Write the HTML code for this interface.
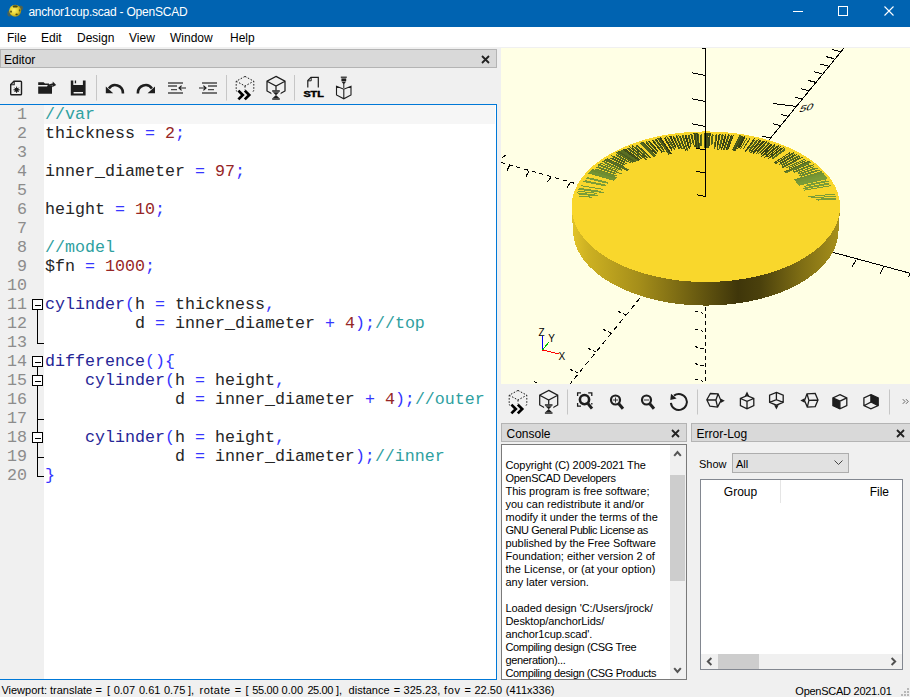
<!DOCTYPE html>
<html lang="en"><head><meta charset="utf-8"><title>anchor1cup.scad - OpenSCAD</title>
<style>
html,body{margin:0;padding:0}
body{width:910px;height:697px;overflow:hidden;background:#f0f0f0;font-family:"Liberation Sans",sans-serif;font-size:12px;color:#000;position:relative}
div{box-sizing:border-box}
.abs{position:absolute}
#titlebar{position:absolute;left:0;top:0;width:910px;height:27px;background:#0063b1;color:#fff}
#titlebar .t{position:absolute;left:28.4px;top:5px;font-size:12px;line-height:14px;white-space:nowrap;letter-spacing:-0.22px}
#menubar{position:absolute;left:0;top:27px;width:910px;height:20px;background:#fff}
#menubar span{position:absolute;top:4px;font-size:12px;line-height:14px}
.docktitle{position:absolute;height:19px;background:#d9d9d9;border:1px solid #b4b4b4;font-size:12px;line-height:14px}
.docktitle .lbl{position:absolute;left:3px;top:3px}
.docktitle svg{position:absolute;right:6px;top:5px}
#editor{position:absolute;left:-1px;top:104px;width:498px;height:576px;border:1px solid #0078d7;background:#fff;overflow:hidden}
#margin{position:absolute;left:0;top:105px;width:44px;height:574px;background:#f0f0f0}
#caret{position:absolute;left:44px;top:105px;width:451px;height:19px;background:#f6f6f6}
.ln{position:absolute;left:0;width:27px;text-align:right;font-family:"Liberation Mono",monospace;font-size:16.667px;line-height:19px;height:19px;color:#8c8c8c}
.cl{position:absolute;left:45px;font-family:"Liberation Mono",monospace;font-size:16.667px;line-height:19px;height:19px;white-space:pre;color:#262626}
.c{color:#2ea0a0}.k{color:#262696}.o{color:#3636ff}.n{color:#962626}
.fold{position:absolute;left:0;top:105px}
#viewport{position:absolute;left:501px;top:48px;width:409px;height:336px;background:#ffffe5;overflow:hidden}
#status{position:absolute;left:0;top:680px;width:910px;height:17px;font-size:11px;line-height:13px}
.small{font-size:11px;line-height:13px}
#console{position:absolute;left:501px;top:444px;width:186px;height:236px;border:1px solid #7a7a7a;background:#fff;overflow:hidden}
#console .txt{position:absolute;left:3.5px;top:14px;font-size:11px;line-height:13px;white-space:pre}
.cl2{height:13px}
.sep{position:absolute;width:1px;background:#c8c8c8}
</style></head><body>
<div id="titlebar">
<svg class="abs" style="left:5px;top:2px" width="22" height="20" viewBox="5 2 22 20"><defs><radialGradient id="og" cx="0.4" cy="0.45" r="0.65"><stop offset="0" stop-color="#fff36a"/><stop offset="0.55" stop-color="#e6cf2e"/><stop offset="1" stop-color="#8a7a10"/></radialGradient></defs><ellipse cx="20.8" cy="8" rx="2.2" ry="2.6" fill="#6b6230" opacity="0.75"/><ellipse cx="9.4" cy="13.4" rx="2" ry="3" fill="#6b6230" opacity="0.7"/><circle cx="15.2" cy="10.8" r="6" fill="url(#og)"/><ellipse cx="15.2" cy="6.4" rx="2.6" ry="1.2" fill="#4d4a12"/><ellipse cx="11" cy="11.6" rx="0.9" ry="1.2" fill="#5d5416"/><ellipse cx="16.6" cy="14.4" rx="1.2" ry="0.8" fill="#4d4a12"/><ellipse cx="19.6" cy="10.4" rx="0.8" ry="1.1" fill="#6a6018"/></svg>
<div class="t">anchor1cup.scad - OpenSCAD</div>
<svg class="abs" style="left:790px;top:0" width="120" height="27" viewBox="0 0 120 27"><path d="M3 11.5 H13" stroke="#fff" stroke-width="1"/><rect x="48.5" y="6.5" width="9" height="9" fill="none" stroke="#fff"/><path d="M94.5 6.5 L103.5 15.5 M103.5 6.5 L94.5 15.5" stroke="#fff" stroke-width="1.1"/></svg>
</div>
<div id="menubar"><span style="left:7px">File</span><span style="left:41px">Edit</span><span style="left:77px">Design</span><span style="left:129px">View</span><span style="left:170px">Window</span><span style="left:230px">Help</span></div>

<div class="docktitle" style="left:0;top:49px;width:497px"><div class="lbl">Editor</div><svg width="9" height="9" viewBox="0 0 9 9"><path d="M1 1 L8 8 M8 1 L1 8" stroke="#222" stroke-width="1.8"/></svg></div>
<svg class="abs" style="left:0;top:68px" width="498" height="36" viewBox="0 68 498 36"><path d="M14 81.2 H20.6 a0.9 0.9 0 0 1 0.9 0.9 V93.9 a0.9 0.9 0 0 1 -0.9 0.9 H11.6 a0.9 0.9 0 0 1 -0.9 -0.9 V84.6 Z" fill="none" stroke="#1e1e1e" stroke-width="1.4"/><path d="M14.2 81.4 V84.8 H10.9" fill="none" stroke="#1e1e1e" stroke-width="1.1"/><circle cx="16.6" cy="89.8" r="2.1" fill="#1e1e1e"/><path d="M16.6 86.6 V93 M13.4 89.8 H19.8 M14.4 87.6 L18.8 92 M18.8 87.6 L14.4 92" stroke="#1e1e1e" stroke-width="0.9"/><path d="M38.2 82.2 H43.6 L45 83.6 H49 V85 H38.2 Z" fill="#1e1e1e"/><path d="M38.2 86.6 H47 L48.6 85.2 H52 V93.8 H38.2 Z" fill="#1e1e1e"/><path d="M47.5 86.6 Q50 83.6 53.5 84.4" fill="none" stroke="#1e1e1e" stroke-width="1.6"/><path d="M52.8 81.6 L56.2 84.9 L52.2 87.2 Z" fill="#1e1e1e"/><path d="M70.8 80.5 H73.3 V85 H82.9 V80.5 H85.6 V95.5 H70.8 Z" fill="#1e1e1e"/><rect x="74.8" y="80.5" width="1.3" height="2.8" fill="#1e1e1e"/><rect x="73.6" y="92" width="9.4" height="1.5" fill="#f0f0f0"/><rect x="96.0" y="75" width="1" height="25.5" fill="#c6c6c6"/><rect x="226.0" y="75" width="1" height="25.5" fill="#c6c6c6"/><rect x="294.0" y="75" width="1" height="25.5" fill="#c6c6c6"/><path d="M108.9 88.4 A7.7 7.7 0 0 1 122.9 92.8 V93.4" fill="none" stroke="#1e1e1e" stroke-width="2.6"/><path d="M105.8 86.4 L113.2 93.3 H105.8 Z" fill="#1e1e1e"/><path d="M151.9 88.4 A7.7 7.7 0 0 0 137.9 92.8 V93.4" fill="none" stroke="#1e1e1e" stroke-width="2.6"/><path d="M155 86.4 L147.6 93.3 H155 Z" fill="#1e1e1e"/><path d="M168 83 H183 M168 86 H177 M171 89.6 H177 M168 93 H183" stroke="#4a4a4a" stroke-width="1.3"/><path d="M179 88 H186 M181.6 85.6 L179 88 L181.6 90.4" stroke="#1e1e1e" stroke-width="1.2" fill="none"/><path d="M202 83 H217 M208 86 H217 M208 89.6 H214 M202 93 H217" stroke="#4a4a4a" stroke-width="1.3"/><path d="M199 88 H206 M203.4 85.6 L206 88 L203.4 90.4" stroke="#1e1e1e" stroke-width="1.2" fill="none"/><path d="M245.0 76.4 L253.8 81.2 L253.8 90.8 L245.0 95.6 L236.2 90.8 L236.2 81.2 Z M236.2 81.2 L245 86 L253.8 81.2 M245 86 V91" fill="none" stroke="#1e1e1e" stroke-width="1" stroke-dasharray="1.6 1.6"/><rect x="237" y="89.6" width="15" height="10.5" fill="#f0f0f0"/><path d="M238.4 90.6 L242.8 95 L238.4 99.4 M244.8 90.6 L249.2 95 L244.8 99.4" fill="none" stroke="#000" stroke-width="2.7"/><path d="M276.0 76.4 L285.0 81.2 L285.0 91.0 L276.0 96.0 L267.0 91.0 L267.0 81.2 Z M267 81.2 L276 86 L285 81.2 M276 86 V91" fill="none" stroke="#1e1e1e" stroke-width="1.25"/><rect x="271.4" y="90.4" width="9.2" height="9.6" fill="#f0f0f0"/><path d="M272.2 91 H279.8 M272.2 99 H279.8" stroke="#1e1e1e" stroke-width="1.3"/><path d="M272.8 92.2 H279.2 L276 95.2 Z M276 95 L279.2 98 H272.8 Z" fill="#1e1e1e"/><path d="M307.8 87.5 V80.6 L311 77.4 H318.3 V87.5" fill="none" stroke="#1e1e1e" stroke-width="1.2"/><path d="M311.2 77.6 V80.8 H308" fill="none" stroke="#1e1e1e" stroke-width="1"/><text x="303.4" y="97.2" font-family="Liberation Sans, sans-serif" font-weight="bold" font-size="9.4" textLength="20.4" lengthAdjust="spacingAndGlyphs" fill="#000" stroke="#000" stroke-width="0.5">STL</text><rect x="340.8" y="76.6" width="6" height="1.2" fill="#1e1e1e"/><rect x="341.4" y="78.4" width="4.8" height="2.6" fill="#1e1e1e"/><path d="M341.4 81.4 H346.2 L343.8 84.4 Z" fill="#1e1e1e"/><path d="M343.8 84 V88" stroke="#1e1e1e" stroke-width="1"/><path d="M336.5 86.2 L343.8 89.2 L351 86.2 V95 L343.8 98.8 L336.5 95 Z M343.8 89.2 V98.8" fill="none" stroke="#1e1e1e" stroke-width="1.1"/></svg>
<div id="editor"></div>
<div id="margin"></div><div id="caret"></div>
<div class="ln" style="top:105px">1</div><div class="cl" style="top:105px"><span class="c">//var</span></div>
<div class="ln" style="top:124px">2</div><div class="cl" style="top:124px">thickness <span class="o">=</span> <span class="n">2</span><span class="o">;</span></div>
<div class="ln" style="top:143px">3</div><div class="cl" style="top:143px"></div>
<div class="ln" style="top:162px">4</div><div class="cl" style="top:162px">inner_diameter <span class="o">=</span> <span class="n">97</span><span class="o">;</span></div>
<div class="ln" style="top:181px">5</div><div class="cl" style="top:181px"></div>
<div class="ln" style="top:200px">6</div><div class="cl" style="top:200px">height <span class="o">=</span> <span class="n">10</span><span class="o">;</span></div>
<div class="ln" style="top:219px">7</div><div class="cl" style="top:219px"></div>
<div class="ln" style="top:238px">8</div><div class="cl" style="top:238px"><span class="c">//model</span></div>
<div class="ln" style="top:257px">9</div><div class="cl" style="top:257px">$fn <span class="o">=</span> <span class="n">1000</span><span class="o">;</span></div>
<div class="ln" style="top:276px">10</div><div class="cl" style="top:276px"></div>
<div class="ln" style="top:295px">11</div><div class="cl" style="top:295px"><span class="k">cylinder</span><span class="o">(</span>h <span class="o">=</span> thickness<span class="o">,</span></div>
<div class="ln" style="top:314px">12</div><div class="cl" style="top:314px">         d <span class="o">=</span> inner_diameter <span class="o">+</span> <span class="n">4</span><span class="o">);</span><span class="c">//top</span></div>
<div class="ln" style="top:333px">13</div><div class="cl" style="top:333px"></div>
<div class="ln" style="top:352px">14</div><div class="cl" style="top:352px"><span class="k">difference</span><span class="o">(){</span></div>
<div class="ln" style="top:371px">15</div><div class="cl" style="top:371px">    <span class="k">cylinder</span><span class="o">(</span>h <span class="o">=</span> height<span class="o">,</span></div>
<div class="ln" style="top:390px">16</div><div class="cl" style="top:390px">             d <span class="o">=</span> inner_diameter <span class="o">+</span> <span class="n">4</span><span class="o">);</span><span class="c">//outer</span></div>
<div class="ln" style="top:409px">17</div><div class="cl" style="top:409px"></div>
<div class="ln" style="top:428px">18</div><div class="cl" style="top:428px">    <span class="k">cylinder</span><span class="o">(</span>h <span class="o">=</span> height<span class="o">,</span></div>
<div class="ln" style="top:447px">19</div><div class="cl" style="top:447px">             d <span class="o">=</span> inner_diameter<span class="o">);</span><span class="c">//inner</span></div>
<div class="ln" style="top:466px">20</div><div class="cl" style="top:466px"><span class="o">}</span></div>

<svg class="fold" width="46" height="575" viewBox="0 105 46 575" shape-rendering="crispEdges"><path d="M37.5 309.5 V343.0 H44" fill="none" stroke="#000"/><rect x="32.5" y="299.5" width="10" height="10" fill="#fff" stroke="#000"/><line x1="35" y1="305.0" x2="41" y2="305.0" stroke="#000"/><path d="M37.5 366.5 V476.0 H44 M37.5 419.0 H44 M37.5 457.0 H44" fill="none" stroke="#000"/><rect x="32.5" y="356.5" width="10" height="10" fill="#fff" stroke="#000"/><line x1="35" y1="362.0" x2="41" y2="362.0" stroke="#000"/><rect x="32.5" y="375.5" width="10" height="10" fill="#fff" stroke="#000"/><line x1="35" y1="381.0" x2="41" y2="381.0" stroke="#000"/><rect x="32.5" y="432.5" width="10" height="10" fill="#fff" stroke="#000"/><line x1="35" y1="438.0" x2="41" y2="438.0" stroke="#000"/></svg>

<div id="viewport"><svg width="409" height="336" viewBox="0 0 409 336" shape-rendering="crispEdges"><defs><linearGradient id="side" x1="0" x2="1" y1="0" y2="0"><stop offset="0" stop-color="#e3c428"/><stop offset="0.06" stop-color="#cdb122"/><stop offset="0.25" stop-color="#a58e1a"/><stop offset="0.45" stop-color="#6e5f11"/><stop offset="0.62" stop-color="#3f360a"/><stop offset="0.70" stop-color="#4a400c"/><stop offset="0.85" stop-color="#7d6c14"/><stop offset="1" stop-color="#a8911b"/></linearGradient></defs>
<path d="M0.0,114.5 L76.0,136.0" stroke="#000" stroke-dasharray="4 4" fill="none"/>
<path d="M8.5,117.5 L6.0,122.5" stroke="#000" fill="none"/>
<path d="M28.0,123.0 L25.0,128.5" stroke="#000" fill="none"/>
<path d="M50.0,129.0 L46.5,134.0" stroke="#000" fill="none"/>
<path d="M69.6,134.0 L66.0,139.5" stroke="#000" fill="none"/>
<path d="M5.0,107.0 L1.5,109.5" stroke="#000" fill="none"/>
<path d="M139.0,250.0 L69.0,336.0" stroke="#000" stroke-dasharray="5 4" fill="none"/>
<path d="M125.0,267.0 l-3,-1.5 m-2,-1 l-3,-1" stroke="#000" fill="none"/>
<path d="M110.0,285.0 l-3,-1.5 m-2,-1 l-3,-1" stroke="#000" fill="none"/>
<path d="M95.0,304.0 l-3,-1.5 m-2,-1 l-3,-1" stroke="#000" fill="none"/>
<path d="M77.0,325.0 l-3,-1.5 m-2,-1 l-3,-1" stroke="#000" fill="none"/>
<path d="M36.0,335.0 l-3,-1.5" stroke="#000" fill="none"/>
<path d="M204.5,252.0 L204.5,336.0" stroke="#000" stroke-dasharray="4 3" fill="none"/>
<path d="M204.5,266.0 m-2,-0.5 l-3,-0.8 m-2.5,-0.7 l-3,-1" stroke="#000" fill="none"/>
<path d="M204.5,284.0 m-2,-0.5 l-3,-0.8 m-2.5,-0.7 l-3,-1" stroke="#000" fill="none"/>
<path d="M204.5,301.5 m-2,-0.5 l-3,-0.8 m-2.5,-0.7 l-3,-1" stroke="#000" fill="none"/>
<path d="M204.5,318.5 m-2,-0.5 l-3,-0.8 m-2.5,-0.7 l-3,-1" stroke="#000" fill="none"/>
<path d="M204.5,334.0 m-2,-0.5 l-3,-0.8 m-2.5,-0.7 l-3,-1" stroke="#000" fill="none"/>
<path d="M268.0,92.0 L343.0,0.0" stroke="#000" fill="none"/>
<path d="M268.8,90.0 l-8,-2" stroke="#000" fill="none"/>
<path d="M279.9,77.8 l-8,-2" stroke="#000" fill="none"/>
<path d="M288.0,68.5 l-8,-2" stroke="#000" fill="none"/>
<path d="M301.7,51.2 l-8,-2" stroke="#000" fill="none"/>
<path d="M308.0,42.8 l-8,-2" stroke="#000" fill="none"/>
<path d="M314.7,34.3 l-8,-2" stroke="#000" fill="none"/>
<path d="M320.8,25.8 l-8,-2" stroke="#000" fill="none"/>
<path d="M326.8,17.9 l-8,-2" stroke="#000" fill="none"/>
<path d="M332.9,10.6 l-8,-2" stroke="#000" fill="none"/>
<path d="M339.0,3.6 l-8,-2" stroke="#000" fill="none"/>
<path d="M295.4,58.5 l-23,-3" stroke="#000" fill="none"/>
<text x="0" y="0" font-family="Liberation Sans, sans-serif" font-size="10" fill="#000" transform="translate(297.5 64.5) rotate(-12) skewX(-35) scale(1.25 0.85)">50</text>
<path d="M327.0,203.0 L410.0,225.5" stroke="#000" fill="none"/>
<path d="M355.3,211.4 L351.3,218.6" stroke="#000" fill="none"/>
<path d="M382.8,218.3 L379.4,225.7" stroke="#000" fill="none"/>
<path d="M409.0,226.0 L407.5,229.0" stroke="#000" fill="none"/>
<path d="M70.5,158.7 A134.3,75.3 0 0 0 339.1,158.7 L337.6,182.3 A132.8,75.3 0 0 1 72.0,182.3 Z" fill="url(#side)"/>
<ellipse cx="204.8" cy="158.7" rx="134.3" ry="75.3" fill="#f9d72c"/>
<path d="M335.7,151.0 L316.7,152.1" stroke="#7a9c38" stroke-width="1" fill="none"/>
<path d="M335.5,150.0 L315.2,151.3" stroke="#7a9c38" stroke-width="1" fill="none"/>
<path d="M335.0,148.0 L310.4,150.0" stroke="#7a9c38" stroke-width="1" fill="none"/>
<path d="M334.5,146.0 L307.1,148.7" stroke="#7a9c38" stroke-width="1" fill="none"/>
<path d="M329.6,137.8 L303.1,142.2" stroke="#7a9c38" stroke-width="1" fill="none"/>
<path d="M328.2,136.1 L302.1,140.8" stroke="#7a9c38" stroke-width="1" fill="none"/>
<path d="M327.7,135.2 L304.1,139.7" stroke="#7a9c38" stroke-width="1" fill="none"/>
<path d="M327.5,133.3 L303.2,138.3" stroke="#7a9c38" stroke-width="1" fill="none"/>
<path d="M325.2,132.8 L305.7,137.0" stroke="#7a9c38" stroke-width="1" fill="none"/>
<path d="M326.5,130.6 L297.8,137.2" stroke="#7a9c38" stroke-width="1" fill="none"/>
<path d="M325.9,129.8 L297.3,136.6" stroke="#7a9c38" stroke-width="1" fill="none"/>
<path d="M325.3,129.0 L296.9,136.0" stroke="#7a9c38" stroke-width="1" fill="none"/>
<path d="M324.6,128.2 L296.4,135.4" stroke="#7a9c38" stroke-width="1" fill="none"/>
<path d="M324.0,127.4 L295.9,134.8" stroke="#789937" stroke-width="1" fill="none"/>
<path d="M323.3,126.6 L295.3,134.2" stroke="#769736" stroke-width="1" fill="none"/>
<path d="M322.7,125.8 L294.8,133.6" stroke="#769635" stroke-width="1" fill="none"/>
<path d="M322.0,125.1 L294.3,133.0" stroke="#739334" stroke-width="1" fill="none"/>
<path d="M321.3,124.3 L293.7,132.5" stroke="#719033" stroke-width="1" fill="none"/>
<path d="M320.6,123.6 L293.2,131.9" stroke="#708e32" stroke-width="1" fill="none"/>
<path d="M318.6,122.3 L300.1,128.2" stroke="#6d8a30" stroke-width="1" fill="none"/>
<path d="M316.1,122.2 L298.0,128.1" stroke="#69852f" stroke-width="1" fill="none"/>
<path d="M316.9,120.0 L298.5,126.4" stroke="#6e8c30" stroke-width="1" fill="none"/>
<path d="M314.0,120.1 L297.3,126.0" stroke="#6a862e" stroke-width="1" fill="none"/>
<path d="M313.0,118.6 L297.4,124.4" stroke="#68832d" stroke-width="1" fill="none"/>
<path d="M312.9,116.7 L292.6,124.6" stroke="#617a2a" stroke-width="1" fill="none"/>
<path d="M309.7,117.0 L292.5,123.9" stroke="#647e2b" stroke-width="1" fill="none"/>
<path d="M308.4,115.7 L292.0,122.5" stroke="#596f26" stroke-width="1" fill="none"/>
<path d="M309.8,114.2 L284.9,124.7" stroke="#66802b" stroke-width="1" fill="none"/>
<path d="M308.9,113.6 L284.2,124.3" stroke="#607828" stroke-width="1" fill="none"/>
<path d="M308.1,113.0 L283.6,123.8" stroke="#556a24" stroke-width="1" fill="none"/>
<path d="M304.8,112.5 L288.1,120.2" stroke="#576c24" stroke-width="1" fill="none"/>
<path d="M304.2,110.9 L284.8,120.2" stroke="#627a28" stroke-width="1" fill="none"/>
<path d="M301.5,109.4 L280.9,119.9" stroke="#526522" stroke-width="1" fill="none"/>
<path d="M299.2,109.6 L280.4,119.3" stroke="#516321" stroke-width="1" fill="none"/>
<path d="M298.5,108.0 L280.7,117.6" stroke="#4f6120" stroke-width="1" fill="none"/>
<path d="M297.7,107.5 L280.6,116.9" stroke="#5d7425" stroke-width="1" fill="none"/>
<path d="M296.0,106.4 L278.0,116.7" stroke="#4d5d1f" stroke-width="1" fill="none"/>
<path d="M293.7,106.8 L279.4,115.1" stroke="#45551b" stroke-width="1" fill="none"/>
<path d="M293.0,105.2 L278.5,114.0" stroke="#5b7023" stroke-width="1" fill="none"/>
<path d="M293.2,104.1 L274.4,115.7" stroke="#4a591d" stroke-width="1" fill="none"/>
<path d="M289.2,104.5 L273.1,114.9" stroke="#49571c" stroke-width="1" fill="none"/>
<path d="M283.9,101.9 L271.1,111.1" stroke="#576b21" stroke-width="1" fill="none"/>
<path d="M284.2,100.6 L270.7,110.5" stroke="#576b21" stroke-width="1" fill="none"/>
<path d="M282.6,99.6 L269.4,109.7" stroke="#44511a" stroke-width="1" fill="none"/>
<path d="M281.1,99.7 L267.2,110.4" stroke="#3b4716" stroke-width="1" fill="none"/>
<path d="M279.9,98.4 L266.6,109.0" stroke="#3a4615" stroke-width="1" fill="none"/>
<path d="M277.8,97.8 L263.5,109.7" stroke="#424e18" stroke-width="1" fill="none"/>
<path d="M276.3,97.9 L264.9,107.6" stroke="#394415" stroke-width="1" fill="none"/>
<path d="M274.1,97.5 L262.5,107.7" stroke="#54671f" stroke-width="1" fill="none"/>
<path d="M274.0,96.4 L260.3,108.8" stroke="#384314" stroke-width="1" fill="none"/>
<path d="M271.2,96.6 L259.8,107.3" stroke="#384214" stroke-width="1" fill="none"/>
<path d="M270.6,95.9 L259.9,106.1" stroke="#374214" stroke-width="1" fill="none"/>
<path d="M268.6,95.4 L258.5,105.4" stroke="#3f4a17" stroke-width="1" fill="none"/>
<path d="M268.1,94.6 L257.2,105.7" stroke="#53661f" stroke-width="1" fill="none"/>
<path d="M265.8,94.4 L254.9,105.9" stroke="#49581b" stroke-width="1" fill="none"/>
<path d="M265.5,93.4 L256.1,103.5" stroke="#3f4917" stroke-width="1" fill="none"/>
<path d="M263.4,93.0 L252.2,105.5" stroke="#363f13" stroke-width="1" fill="none"/>
<path d="M261.8,93.4 L251.9,104.7" stroke="#3e4916" stroke-width="1" fill="none"/>
<path d="M259.9,92.9 L249.4,105.4" stroke="#49571a" stroke-width="1" fill="none"/>
<path d="M259.4,92.0 L250.5,102.9" stroke="#3e4816" stroke-width="1" fill="none"/>
<path d="M257.6,91.2 L248.2,103.4" stroke="#48571a" stroke-width="1" fill="none"/>
<path d="M255.6,92.4 L248.0,102.3" stroke="#52641e" stroke-width="1" fill="none"/>
<path d="M253.7,91.8 L246.5,101.7" stroke="#52641e" stroke-width="1" fill="none"/>
<path d="M253.6,90.4 L243.7,104.3" stroke="#3d4716" stroke-width="1" fill="none"/>
<path d="M249.1,90.3 L242.1,101.1" stroke="#48561a" stroke-width="1" fill="none"/>
<path d="M246.1,89.9 L239.2,101.3" stroke="#52641e" stroke-width="1" fill="none"/>
<path d="M244.0,89.6 L238.2,99.9" stroke="#343d12" stroke-width="1" fill="none"/>
<path d="M243.6,88.4 L236.5,101.2" stroke="#343d12" stroke-width="1" fill="none"/>
<path d="M242.0,89.3 L237.0,98.6" stroke="#3d4716" stroke-width="1" fill="none"/>
<path d="M241.7,87.9 L233.9,102.8" stroke="#48561a" stroke-width="1" fill="none"/>
<path d="M240.7,87.7 L233.1,102.6" stroke="#3d4716" stroke-width="1" fill="none"/>
<path d="M239.7,87.5 L232.4,102.5" stroke="#52641e" stroke-width="1" fill="none"/>
<path d="M238.7,87.4 L231.6,102.4" stroke="#48561a" stroke-width="1" fill="none"/>
<path d="M232.5,86.9 L226.9,101.4" stroke="#343d12" stroke-width="1" fill="none"/>
<path d="M230.9,88.3 L226.0,101.6" stroke="#48561a" stroke-width="1" fill="none"/>
<path d="M230.5,86.6 L225.1,101.6" stroke="#343d12" stroke-width="1" fill="none"/>
<path d="M228.2,87.1 L223.4,101.8" stroke="#52641e" stroke-width="1" fill="none"/>
<path d="M227.5,86.2 L222.5,102.0" stroke="#3d4716" stroke-width="1" fill="none"/>
<path d="M225.0,87.6 L221.4,100.2" stroke="#343d12" stroke-width="1" fill="none"/>
<path d="M224.5,85.8 L220.2,101.8" stroke="#3d4716" stroke-width="1" fill="none"/>
<path d="M222.1,87.1 L218.6,101.3" stroke="#48561a" stroke-width="1" fill="none"/>
<path d="M221.2,86.4 L217.8,101.7" stroke="#52641e" stroke-width="1" fill="none"/>
<path d="M219.2,86.3 L216.1,101.7" stroke="#48561a" stroke-width="1" fill="none"/>
<path d="M218.3,85.7 L215.9,98.5" stroke="#343d12" stroke-width="1" fill="none"/>
<path d="M216.0,87.0 L214.1,99.4" stroke="#3d4716" stroke-width="1" fill="none"/>
<path d="M215.2,86.1 L213.0,101.2" stroke="#52641e" stroke-width="1" fill="none"/>
<path d="M212.1,86.7 L211.2,95.6" stroke="#52641e" stroke-width="1" fill="none"/>
<path d="M211.2,85.6 L210.2,96.6" stroke="#52641e" stroke-width="1" fill="none"/>
<path d="M209.2,85.0 L208.4,97.5" stroke="#3d4716" stroke-width="1" fill="none"/>
<path d="M208.2,84.9 L207.5,100.2" stroke="#3d4716" stroke-width="1" fill="none"/>
<path d="M207.1,84.9 L206.7,100.2" stroke="#48561a" stroke-width="1" fill="none"/>
<path d="M206.1,84.9 L205.8,100.2" stroke="#3d4716" stroke-width="1" fill="none"/>
<path d="M205.1,84.9 L205.0,100.2" stroke="#3d4716" stroke-width="1" fill="none"/>
<path d="M204.1,84.9 L204.2,100.2" stroke="#52641e" stroke-width="1" fill="none"/>
<path d="M203.1,84.9 L203.4,100.2" stroke="#48561a" stroke-width="1" fill="none"/>
<path d="M200.0,85.7 L200.8,97.9" stroke="#52641e" stroke-width="1" fill="none"/>
<path d="M199.1,86.7 L200.0,98.1" stroke="#48561a" stroke-width="1" fill="none"/>
<path d="M196.9,85.0 L198.6,100.3" stroke="#48561a" stroke-width="1" fill="none"/>
<path d="M195.9,85.1 L197.8,100.3" stroke="#343d12" stroke-width="1" fill="none"/>
<path d="M194.9,85.1 L197.0,100.4" stroke="#52641e" stroke-width="1" fill="none"/>
<path d="M193.9,85.2 L196.1,100.4" stroke="#3d4716" stroke-width="1" fill="none"/>
<path d="M192.9,85.2 L195.3,100.4" stroke="#3d4716" stroke-width="1" fill="none"/>
<path d="M191.1,86.7 L193.4,99.0" stroke="#48561a" stroke-width="1" fill="none"/>
<path d="M189.8,85.5 L191.9,95.4" stroke="#48561a" stroke-width="1" fill="none"/>
<path d="M188.1,86.9 L190.1,95.6" stroke="#48561a" stroke-width="1" fill="none"/>
<path d="M187.1,87.1 L190.0,98.6" stroke="#48561a" stroke-width="1" fill="none"/>
<path d="M185.0,86.9 L189.0,101.2" stroke="#3d4716" stroke-width="1" fill="none"/>
<path d="M184.1,87.3 L187.8,100.2" stroke="#343d12" stroke-width="1" fill="none"/>
<path d="M182.1,87.4 L187.0,102.9" stroke="#52641e" stroke-width="1" fill="none"/>
<path d="M180.9,86.9 L185.9,101.8" stroke="#48561a" stroke-width="1" fill="none"/>
<path d="M179.1,87.7 L184.5,102.6" stroke="#3d4716" stroke-width="1" fill="none"/>
<path d="M177.8,87.1 L183.0,100.9" stroke="#52641e" stroke-width="1" fill="none"/>
<path d="M175.8,87.2 L181.4,101.1" stroke="#52641e" stroke-width="1" fill="none"/>
<path d="M175.2,88.4 L180.6,101.2" stroke="#3d4716" stroke-width="1" fill="none"/>
<path d="M173.3,88.9 L178.8,101.0" stroke="#52641e" stroke-width="1" fill="none"/>
<path d="M171.8,87.8 L178.0,101.2" stroke="#3d4716" stroke-width="1" fill="none"/>
<path d="M169.6,87.8 L175.3,99.3" stroke="#343d12" stroke-width="1" fill="none"/>
<path d="M168.7,88.1 L174.8,100.1" stroke="#3d4716" stroke-width="1" fill="none"/>
<path d="M167.4,89.7 L174.2,102.3" stroke="#48561a" stroke-width="1" fill="none"/>
<path d="M165.5,88.3 L172.7,101.2" stroke="#52641e" stroke-width="1" fill="none"/>
<path d="M164.0,89.4 L170.6,100.6" stroke="#3d4716" stroke-width="1" fill="none"/>
<path d="M163.0,89.7 L171.1,103.0" stroke="#343d12" stroke-width="1" fill="none"/>
<path d="M159.5,89.4 L170.3,105.9" stroke="#343d12" stroke-width="1" fill="none"/>
<path d="M158.5,89.6 L169.5,106.1" stroke="#343d12" stroke-width="1" fill="none"/>
<path d="M157.5,89.8 L168.8,106.3" stroke="#52641e" stroke-width="1" fill="none"/>
<path d="M156.5,90.1 L168.0,106.4" stroke="#48561a" stroke-width="1" fill="none"/>
<path d="M154.8,90.8 L162.7,101.6" stroke="#3d4816" stroke-width="1" fill="none"/>
<path d="M153.9,91.2 L163.5,104.0" stroke="#52641e" stroke-width="1" fill="none"/>
<path d="M152.2,92.1 L161.4,103.8" stroke="#52641e" stroke-width="1" fill="none"/>
<path d="M150.7,91.6 L160.9,104.3" stroke="#353e12" stroke-width="1" fill="none"/>
<path d="M148.1,92.9 L157.0,103.1" stroke="#353f12" stroke-width="1" fill="none"/>
<path d="M147.2,93.2 L157.1,104.4" stroke="#49571a" stroke-width="1" fill="none"/>
<path d="M145.2,93.7 L156.1,105.5" stroke="#53651e" stroke-width="1" fill="none"/>
<path d="M145.1,94.9 L154.8,105.3" stroke="#364013" stroke-width="1" fill="none"/>
<path d="M142.2,94.4 L151.9,104.4" stroke="#4a581b" stroke-width="1" fill="none"/>
<path d="M140.7,94.2 L154.7,108.3" stroke="#4a591b" stroke-width="1" fill="none"/>
<path d="M139.8,94.5 L153.9,108.5" stroke="#53661f" stroke-width="1" fill="none"/>
<path d="M138.8,94.9 L153.1,108.7" stroke="#54661f" stroke-width="1" fill="none"/>
<path d="M135.9,97.0 L150.2,109.8" stroke="#414c18" stroke-width="1" fill="none"/>
<path d="M135.2,97.6 L149.5,110.2" stroke="#54681f" stroke-width="1" fill="none"/>
<path d="M133.9,98.7 L146.7,109.6" stroke="#556820" stroke-width="1" fill="none"/>
<path d="M131.1,97.6 L146.2,110.1" stroke="#424e18" stroke-width="1" fill="none"/>
<path d="M131.0,99.7 L145.8,111.6" stroke="#4d5d1d" stroke-width="1" fill="none"/>
<path d="M128.3,98.7 L144.9,111.7" stroke="#4d5d1d" stroke-width="1" fill="none"/>
<path d="M126.6,99.6 L141.1,110.6" stroke="#44511a" stroke-width="1" fill="none"/>
<path d="M126.4,100.6 L139.7,110.4" stroke="#576b21" stroke-width="1" fill="none"/>
<path d="M123.6,100.6 L139.1,111.8" stroke="#3e4a17" stroke-width="1" fill="none"/>
<path d="M122.6,101.1 L138.3,112.1" stroke="#46531b" stroke-width="1" fill="none"/>
<path d="M121.7,101.5 L137.6,112.4" stroke="#3f4c18" stroke-width="1" fill="none"/>
<path d="M120.8,101.9 L136.8,112.8" stroke="#586d22" stroke-width="1" fill="none"/>
<path d="M119.8,102.3 L136.1,113.1" stroke="#596e22" stroke-width="1" fill="none"/>
<path d="M118.9,102.8 L134.8,113.1" stroke="#596e22" stroke-width="1" fill="none"/>
<path d="M118.0,103.2 L134.0,113.5" stroke="#51631f" stroke-width="1" fill="none"/>
<path d="M117.1,103.7 L133.3,113.8" stroke="#49581d" stroke-width="1" fill="none"/>
<path d="M116.2,104.1 L132.5,114.2" stroke="#5a7023" stroke-width="1" fill="none"/>
<path d="M115.3,104.6 L131.8,114.6" stroke="#536620" stroke-width="1" fill="none"/>
<path d="M114.9,106.4 L129.9,115.1" stroke="#546821" stroke-width="1" fill="none"/>
<path d="M114.9,107.4 L126.2,113.8" stroke="#5c7325" stroke-width="1" fill="none"/>
<path d="M112.9,108.2 L123.9,114.2" stroke="#48591d" stroke-width="1" fill="none"/>
<path d="M110.2,107.7 L126.2,116.3" stroke="#576b23" stroke-width="1" fill="none"/>
<path d="M110.5,109.8 L124.2,116.9" stroke="#4b5d1e" stroke-width="1" fill="none"/>
<path d="M108.9,109.9 L123.3,117.3" stroke="#596e24" stroke-width="1" fill="none"/>
<path d="M106.0,110.4 L122.6,118.5" stroke="#4f6120" stroke-width="1" fill="none"/>
<path d="M104.7,110.8 L127.9,121.8" stroke="#5c7226" stroke-width="1" fill="none"/>
<path d="M103.9,111.3 L127.2,122.3" stroke="#566b24" stroke-width="1" fill="none"/>
<path d="M103.1,111.9 L126.6,122.7" stroke="#576c25" stroke-width="1" fill="none"/>
<path d="M101.5,113.1 L121.1,121.7" stroke="#5f7728" stroke-width="1" fill="none"/>
<path d="M102.7,114.6 L120.7,122.4" stroke="#657f2a" stroke-width="1" fill="none"/>
<path d="M99.2,115.0 L117.0,122.4" stroke="#67822c" stroke-width="1" fill="none"/>
<path d="M97.6,116.2 L116.2,123.6" stroke="#607829" stroke-width="1" fill="none"/>
<path d="M97.3,117.1 L120.5,126.0" stroke="#6a852d" stroke-width="1" fill="none"/>
<path d="M96.5,118.6 L115.3,125.6" stroke="#68832d" stroke-width="1" fill="none"/>
<path d="M95.6,119.2 L113.8,125.8" stroke="#65802c" stroke-width="1" fill="none"/>
<path d="M95.0,120.9 L115.4,127.9" stroke="#6b882f" stroke-width="1" fill="none"/>
<path d="M93.9,121.4 L112.9,127.8" stroke="#6d8930" stroke-width="1" fill="none"/>
<path d="M91.2,121.5 L116.1,129.6" stroke="#708e31" stroke-width="1" fill="none"/>
<path d="M90.4,122.2 L115.5,130.2" stroke="#6d8a30" stroke-width="1" fill="none"/>
<path d="M89.7,122.9 L114.9,130.7" stroke="#708f32" stroke-width="1" fill="none"/>
<path d="M89.0,123.6 L114.4,131.3" stroke="#739333" stroke-width="1" fill="none"/>
<path d="M88.3,124.4 L113.8,131.9" stroke="#749434" stroke-width="1" fill="none"/>
<path d="M87.6,125.1 L113.3,132.5" stroke="#729234" stroke-width="1" fill="none"/>
<path d="M85.9,129.4 L107.2,134.6" stroke="#7a9c38" stroke-width="1" fill="none"/>
<path d="M85.4,130.2 L107.2,135.4" stroke="#7a9c38" stroke-width="1" fill="none"/>
<path d="M84.1,132.7 L104.6,137.1" stroke="#7a9c38" stroke-width="1" fill="none"/>
<path d="M82.1,133.3 L103.8,137.8" stroke="#7a9c38" stroke-width="1" fill="none"/>
<path d="M80.1,137.7 L102.0,141.4" stroke="#7a9c38" stroke-width="1" fill="none"/>
<path d="M78.5,140.4 L100.5,143.5" stroke="#7a9c38" stroke-width="1" fill="none"/>
<path d="M77.4,141.2 L102.8,144.7" stroke="#7a9c38" stroke-width="1" fill="none"/>
<path d="M76.8,143.1 L96.0,145.4" stroke="#7a9c38" stroke-width="1" fill="none"/>
<path d="M75.7,144.9 L93.7,146.9" stroke="#7a9c38" stroke-width="1" fill="none"/>
<path d="M77.7,146.1 L97.0,148.0" stroke="#7a9c38" stroke-width="1" fill="none"/>
<path d="M77.6,148.1 L90.8,149.2" stroke="#7a9c38" stroke-width="1" fill="none"/>
<path d="M204.5,0.0 L204.5,148.5" stroke="#000" fill="none"/>
<path d="M204.5,0.5 h-4" stroke="#000" fill="none"/>
<path d="M204.5,27.4 l-14,-2.7" stroke="#000" fill="none"/>
<path d="M204.5,53.4 l-14,-2.7" stroke="#000" fill="none"/>
<path d="M204.5,78.4 l-14,-2.7" stroke="#000" fill="none"/>
<path d="M204.5,102.0 l-9,-1.7" stroke="#000" fill="none"/>
<path d="M204.5,125.0 l-9,-1.7" stroke="#000" fill="none"/>
<path d="M204.5,148.5 l-9,-1.7" stroke="#000" fill="none"/>
<path d="M41.5,302.0 L41.5,288.0" stroke="#0000ff" fill="none"/>
<path d="M41.5,302.0 L58.0,306.0" stroke="#ff0000" fill="none"/>
<path d="M41.5,302.0 L48.0,294.0" stroke="#00c000" fill="none"/>
<text x="37.60000000000002" y="288.2" font-family="Liberation Sans, sans-serif" font-size="10" fill="#000">Z</text>
<text x="47.200000000000045" y="294" font-family="Liberation Sans, sans-serif" font-size="10" fill="#000">Y</text>
<text x="57.60000000000002" y="311.5" font-family="Liberation Sans, sans-serif" font-size="10" fill="#000">X</text></svg></div>
<svg class="abs" style="left:501px;top:385px" width="409" height="36" viewBox="501 385 409 36"><path d="M518.0 390.4 L526.8 395.2 L526.8 404.8 L518.0 409.6 L509.2 404.8 L509.2 395.2 Z M509.2 395.2 L518 400 L526.8 395.2 M518 400 V405" fill="none" stroke="#1e1e1e" stroke-width="1" stroke-dasharray="1.6 1.6"/><rect x="510" y="403.6" width="15" height="10.5" fill="#f0f0f0"/><path d="M511.4 404.6 L515.8 409 L511.4 413.4 M517.8 404.6 L522.2 409 L517.8 413.4" fill="none" stroke="#000" stroke-width="2.7"/><path d="M548.7 390.4 L557.7 395.2 L557.7 405.0 L548.7 410.0 L539.7 405.0 L539.7 395.2 Z M539.7 395.2 L548.7 400 L557.7 395.2 M548.7 400 V405" fill="none" stroke="#1e1e1e" stroke-width="1.25"/><rect x="544.1" y="404.4" width="9.2" height="9.6" fill="#f0f0f0"/><path d="M544.9000000000001 405 H552.5 M544.9000000000001 413 H552.5" stroke="#1e1e1e" stroke-width="1.3"/><path d="M545.5 406.2 H551.9000000000001 L548.7 409.2 Z M548.7 409 L551.9000000000001 412 H545.5 Z" fill="#1e1e1e"/><rect x="567.0" y="389.5" width="1" height="25" fill="#c6c6c6"/><rect x="697.0" y="389.5" width="1" height="25" fill="#c6c6c6"/><rect x="889.0" y="389.5" width="1" height="25" fill="#c6c6c6"/><path d="M577.6 396 V392.8 H581 M588.2 392.8 H591.8 V396 M577.6 403 V406.2 H581 M591.8 403 V404.5" fill="none" stroke="#1e1e1e" stroke-width="1.3"/><circle cx="584.5" cy="399.6" r="4.6" fill="none" stroke="#1e1e1e" stroke-width="2.6"/><path d="M588 403.6 L592 408.6" stroke="#1e1e1e" stroke-width="3"/><circle cx="615.5" cy="400" r="4.5" fill="none" stroke="#1e1e1e" stroke-width="2.2"/><path d="M618.8 403.8 L623 408.8" stroke="#1e1e1e" stroke-width="3"/><path d="M613 400 H618 M615.5 397.5 V402.5" stroke="#1e1e1e" stroke-width="0.9"/><circle cx="646.5" cy="400" r="4.5" fill="none" stroke="#1e1e1e" stroke-width="2.2"/><path d="M649.8 403.8 L654 408.8" stroke="#1e1e1e" stroke-width="3"/><path d="M644 400 H649" stroke="#1e1e1e" stroke-width="0.9"/><path d="M670.9 402.8 A8 8 0 1 0 674 395.6" fill="none" stroke="#1e1e1e" stroke-width="2"/><path d="M671 393.7 L670.3 400 L676.6 398.5 Z" fill="#1e1e1e"/><path d="M706.8 399.8 L710.4 393.5 L718.1 393.8 L720.9 400.6 L717.6 407.1 L709.9 406.2 Z M706.8 399.8 L715.9 400 L718.1 393.8 M715.9 400 L717.6 407.1" fill="none" stroke="#1e1e1e" stroke-width="1.3"/><path d="M720.6 398.4 L724.8 400.7 L720.6 403 Z" fill="#1e1e1e"/><path d="M747.0 395.7 L753.8 398.5 L753.8 405.6 L747.0 408.9 L740.4 405.6 L740.4 398.5 Z M740.4 398.5 L747 401.4 L753.8 398.5 M747 401.4 V408.9" fill="none" stroke="#1e1e1e" stroke-width="1.3"/><path d="M744.8 396 L747 391.6 L749.2 396 Z" fill="#1e1e1e"/><path d="M776.4 392.4 L783.2 395.2 L783.2 402.3 L776.4 405.2 L769.6 402.3 L769.6 395.2 Z M769.6 402.3 L776.4 399.6 L783.2 402.3 M776.4 399.6 V392.4" fill="none" stroke="#1e1e1e" stroke-width="1.3"/><path d="M774.2 405.2 L776.4 409.6 L778.6 405.2 Z" fill="#1e1e1e"/><path d="M804.5 400.6 L807.0 393.8 L815.2 393.4 L818.0 400.0 L815.2 406.6 L807.3 407.1 Z M818 400 L808.9 400.4 L807 393.8 M808.9 400.4 L807.3 407.1" fill="none" stroke="#1e1e1e" stroke-width="1.3"/><path d="M804.6 398.2 L800.3 400.5 L804.6 402.8 Z" fill="#1e1e1e"/><path d="M832.9 397.9 L839.9 401.2 V408.9 L832.9 405.7 Z" fill="#1e1e1e"/><path d="M839.9 394.6 L846.8 397.9 L846.8 405.7 L839.9 408.9 L832.9 405.7 L832.9 397.9 Z M832.9 397.9 L839.9 401.2 L846.8 397.9 M839.9 401.2 V408.9" fill="none" stroke="#1e1e1e" stroke-width="1.3"/><path d="M870.9 394.6 L878.2 397.9 V405.7 L870.9 402 Z" fill="#1e1e1e"/><path d="M870.9 394.6 L878.2 397.9 L878.2 405.7 L870.9 408.9 L863.9 405.7 L863.9 397.9 Z M870.9 394.6 V402 L863.9 405.7 M870.9 402 L878.2 405.7" fill="none" stroke="#1e1e1e" stroke-width="1.3"/><path d="M902.8 399.2 L905 401.5 L902.8 403.8 M906 399.2 L908.2 401.5 L906 403.8" fill="none" stroke="#555" stroke-width="0.9"/></svg>

<div class="docktitle" style="left:501px;top:423px;width:186px"><div class="lbl" style="left:4.5px">Console</div><svg width="9" height="9" viewBox="0 0 9 9"><path d="M1 1 L8 8 M8 1 L1 8" stroke="#222" stroke-width="1.8"/></svg></div>
<div id="console"><div class="txt"><div class="cl2" style="letter-spacing:-0.096px">Copyright (C) 2009-2021 The</div><div class="cl2" style="letter-spacing:-0.32px">OpenSCAD Developers</div><div class="cl2" style="letter-spacing:-0.053px">This program is free software;</div><div class="cl2" style="letter-spacing:-0.004px">you can redistribute it and/or</div><div class="cl2" style="letter-spacing:0.021px">modify it under the terms of the</div><div class="cl2" style="letter-spacing:-0.448px">GNU General Public License as</div><div class="cl2" style="letter-spacing:-0.066px">published by the Free Software</div><div class="cl2" style="letter-spacing:0.026px">Foundation; either version 2 of</div><div class="cl2" style="letter-spacing:0.022px">the License, or (at your option)</div><div class="cl2" style="letter-spacing:-0.02px">any later version.</div><div class="cl2">&nbsp;</div><div class="cl2" style="letter-spacing:-0.078px">Loaded design &#39;C:/Users/jrock/</div><div class="cl2" style="letter-spacing:-0.088px">Desktop/anchorLids/</div><div class="cl2" style="letter-spacing:-0.137px">anchor1cup.scad&#39;.</div><div class="cl2" style="letter-spacing:-0.354px">Compiling design (CSG Tree</div><div class="cl2" style="letter-spacing:-0.345px">generation)...</div><div class="cl2" style="letter-spacing:-0.357px">Compiling design (CSG Products</div></div>
<div class="abs" style="right:0;top:0;width:16px;height:234px;background:#f0f0f0"></div>
<div class="abs" style="right:1px;top:30px;width:15px;height:106px;background:#cdcdcd"></div>
<svg class="abs" style="right:4px;top:5px" width="9" height="7" viewBox="0 0 9 7"><path d="M1.2 5.8 L4.5 2 L7.8 5.8" stroke="#555" stroke-width="2" fill="none"/></svg>
<svg class="abs" style="right:4px;bottom:5px" width="9" height="7" viewBox="0 0 9 7"><path d="M1.2 1.2 L4.5 5 L7.8 1.2" stroke="#555" stroke-width="2" fill="none"/></svg>
</div>

<div class="docktitle" style="left:691px;top:423px;width:224px"><div class="lbl" style="left:4.5px">Error-Log</div><svg style="right:9.5px" width="9" height="9" viewBox="0 0 9 9"><path d="M1 1 L8 8 M8 1 L1 8" stroke="#222" stroke-width="1.8"/></svg></div>
<div class="abs small" style="left:699px;top:458px">Show</div>
<div class="abs" style="left:732px;top:453px;width:117px;height:20px;border:1px solid #adadad;background:#e1e1e1"><div class="abs small" style="left:3px;top:4px">All</div><svg class="abs" style="right:5px;top:6px" width="9" height="6" viewBox="0 0 9 6"><path d="M0.5 0.5 L4.5 4.5 L8.5 0.5" stroke="#444" fill="none"/></svg></div>
<div class="abs" style="left:700px;top:479px;width:203px;height:191px;border:1px solid #828790;background:#fff">
<div class="abs small" style="left:0;top:6px;width:79px;text-align:center;font-size:12px">Group</div>
<div class="abs" style="left:79px;top:0;width:1px;height:23px;background:#e5e5e5"></div>
<div class="abs small" style="right:13px;top:6px;font-size:12px">File</div>
<div class="abs" style="left:0;bottom:0;width:201px;height:15px;background:#f0f0f0"></div>
<div class="abs" style="left:17px;bottom:0;width:41px;height:15px;background:#cdcdcd"></div>
<svg class="abs" style="left:5px;bottom:3px" width="7" height="9" viewBox="0 0 7 9"><path d="M5.4 1 L1.8 4.5 L5.4 8" stroke="#505050" stroke-width="1.9" fill="none"/></svg>
<svg class="abs" style="right:5px;bottom:3px" width="7" height="9" viewBox="0 0 7 9"><path d="M1.6 1 L5.2 4.5 L1.6 8" stroke="#505050" stroke-width="1.9" fill="none"/></svg>
</div>

<div id="status"><span class="abs" style="left:1.4px;top:4px">Viewport:</span> <span class="abs" style="left:50px;top:4px">translate</span> <span class="abs" style="left:95.6px;top:4px">=</span> <span class="abs" style="left:107px;top:4px">[</span> <span class="abs" style="left:113.7px;top:4px">0.07</span> <span class="abs" style="left:139px;top:4px">0.61</span> <span class="abs" style="left:163.9px;top:4px">0.75</span> <span class="abs" style="left:188px;top:4px">],</span> <span class="abs" style="left:199.5px;top:4px;letter-spacing:0.5px">rotate</span> <span class="abs" style="left:234.7px;top:4px">=</span> <span class="abs" style="left:245.6px;top:4px">[</span> <span class="abs" style="left:252.2px;top:4px;letter-spacing:-0.3px">55.00</span> <span class="abs" style="left:281.6px;top:4px">0.00</span> <span class="abs" style="left:307.4px;top:4px;letter-spacing:-0.4px">25.00</span> <span class="abs" style="left:336px;top:4px">],</span> <span class="abs" style="left:348.6px;top:4px">distance</span> <span class="abs" style="left:393.7px;top:4px">=</span> <span class="abs" style="left:403.6px;top:4px">325.23,</span> <span class="abs" style="left:443.9px;top:4px;letter-spacing:0.7px">fov</span> <span class="abs" style="left:464.6px;top:4px">=</span> <span class="abs" style="left:474.5px;top:4px">22.50</span> <span class="abs" style="left:505.8px;top:4px">(411x336)</span> <div class="abs" style="right:18.5px;top:4.5px;white-space:nowrap;letter-spacing:-0.26px">OpenSCAD 2021.01</div>
<svg class="abs" style="right:0;bottom:0" width="12" height="12" viewBox="0 0 12 12" fill="#b8b8b8"><rect x="9" y="9" width="2" height="2"/><rect x="6" y="9" width="2" height="2"/><rect x="3" y="9" width="2" height="2"/><rect x="9" y="6" width="2" height="2"/><rect x="6" y="6" width="2" height="2"/><rect x="9" y="3" width="2" height="2"/></svg></div>
</body></html>
